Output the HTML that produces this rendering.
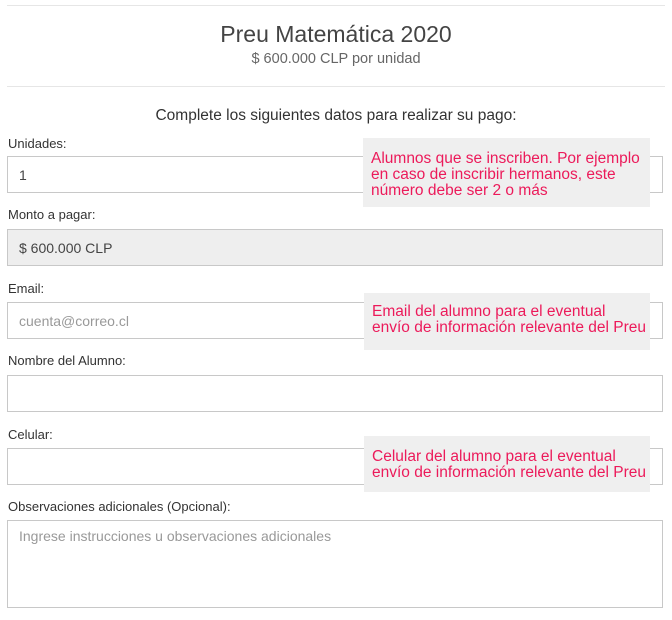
<!DOCTYPE html>
<html><head><meta charset="utf-8"><style>
*{box-sizing:border-box;margin:0;padding:0}
body{width:672px;height:620px;background:#fff;font-family:"Liberation Sans",sans-serif;color:#333;position:relative;overflow:hidden}
.abs{position:absolute}
.hr{position:absolute;left:7px;width:658px;height:1px;background:#e6e6e6}
.lbl{position:absolute;left:8px;font-size:13px;color:#333}
.in{position:absolute;left:7px;width:656px;height:37px;border:1px solid #c8c8c8;background:#fff;font-size:14px;padding:10px 11px;color:#444}
.tip{position:absolute;background:#efefef;color:#ec1a5a;font-size:15.5px;line-height:16px;padding:0 8px;white-space:nowrap}
</style></head><body>
<div class="hr" style="top:5px"></div>
<div class="abs" style="left:0;width:672px;top:21px;text-align:center;font-size:23px;color:#444">Preu Matemática 2020</div>
<div class="abs" style="left:0;width:672px;top:51px;text-align:center;font-size:14.5px;color:#666">$ 600.000 CLP por unidad</div>
<div class="hr" style="top:86px"></div>
<div class="abs" style="left:0;width:672px;top:107px;text-align:center;font-size:15.5px;color:#333">Complete los siguientes datos para realizar su pago:</div>
<div class="lbl" style="top:136px">Unidades:</div>
<div class="in" style="top:156px">1</div>
<div class="lbl" style="top:207px">Monto a pagar:</div>
<div class="in" style="top:229px;background:#eee">$ 600.000 CLP</div>
<div class="lbl" style="top:281px">Email:</div>
<div class="in" style="top:302px;color:#999">cuenta@correo.cl</div>
<div class="lbl" style="top:353px">Nombre del Alumno:</div>
<div class="in" style="top:375px"></div>
<div class="lbl" style="top:427px">Celular:</div>
<div class="in" style="top:448px"></div>
<div class="lbl" style="top:499px">Observaciones adicionales (Opcional):</div>
<div class="in" style="top:520px;height:88px;color:#999;padding-top:7px">Ingrese instrucciones u observaciones adicionales</div>
<div class="tip" style="left:363px;top:138px;width:287px;height:69px;padding-top:13px">Alumnos que se inscriben. Por ejemplo<br>en caso de inscribir hermanos, este<br>número debe ser 2 o más</div>
<div class="tip" style="left:364px;top:293px;width:286px;height:57px;padding-top:11px">Email del alumno para el eventual<br>envío de información relevante del Preu</div>
<div class="tip" style="left:364px;top:436px;width:286px;height:56px;padding-top:13px">Celular del alumno para el eventual<br>envío de información relevante del Preu</div>
</body></html>
